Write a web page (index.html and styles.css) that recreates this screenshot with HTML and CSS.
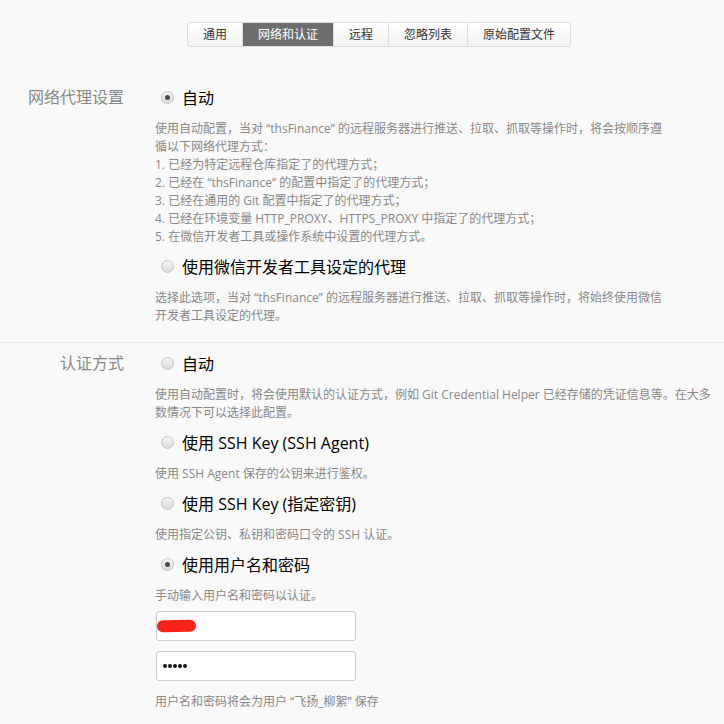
FILE: index.html
```html
<!DOCTYPE html>
<html lang="zh-CN">
<head>
<meta charset="utf-8">
<title>网络和认证</title>
<link rel="stylesheet" href="styles.css">
</head>
<body>
<div class="page">
  <nav class="tabs">
    <span class="tab">通用</span><span class="tab active">网络和认证</span><span class="tab">远程</span><span class="tab">忽略列表</span><span class="tab">原始配置文件</span>
  </nav>

  <section class="group first">
    <div class="glabel">网络代理设置</div>
    <div class="gbody">
      <div class="opt"><span class="radio checked"></span><span>自动</span></div>
      <p class="desc">使用自动配置，当对 “thsFinance” 的远程服务器进行推送、拉取、抓取等操作时，将会按顺序遵<br>循以下网络代理方式：<br>1. 已经为特定远程仓库指定了的代理方式；<br>2. 已经在 “thsFinance” 的配置中指定了的代理方式；<br>3. 已经在通用的 Git 配置中指定了的代理方式；<br>4. 已经在环境变量 HTTP_PROXY、HTTPS_PROXY 中指定了的代理方式；<br>5. 在微信开发者工具或操作系统中设置的代理方式。</p>
      <div class="opt"><span class="radio"></span><span>使用微信开发者工具设定的代理</span></div>
      <p class="desc">选择此选项，当对 “thsFinance” 的远程服务器进行推送、拉取、抓取等操作时，将始终使用微信<br>开发者工具设定的代理。</p>
    </div>
  </section>

  <section class="group second">
    <div class="glabel">认证方式</div>
    <div class="gbody">
      <div class="opt"><span class="radio"></span><span>自动</span></div>
      <p class="desc">使用自动配置时，将会使用默认的认证方式，例如 Git Credential Helper 已经存储的凭证信息等。在大多<br>数情况下可以选择此配置。</p>
      <div class="opt"><span class="radio"></span><span>使用 SSH Key (SSH Agent)</span></div>
      <p class="desc">使用 SSH Agent 保存的公钥来进行鉴权。</p>
      <div class="opt"><span class="radio"></span><span>使用 SSH Key (指定密钥)</span></div>
      <p class="desc">使用指定公钥、私钥和密码口令的 SSH 认证。</p>
      <div class="opt"><span class="radio checked"></span><span>使用用户名和密码</span></div>
      <p class="desc tight">手动输入用户名和密码以认证。</p>
      <div class="field user"><span class="scribble"></span></div>
      <div class="field pass"><span class="dot"></span><span class="dot"></span><span class="dot"></span><span class="dot"></span><span class="dot"></span></div>
      <p class="desc note">用户名和密码将会为用户 “飞扬_柳絮” 保存</p>
    </div>
  </section>
</div>
</body>
</html>
```

FILE: styles.css
```css
html, body {
  margin: 0;
  background: #f9f9f9;
  font-family: "Open Sans", "Noto Sans CJK SC", sans-serif;
}

.page {
  padding-top: 22px;
}

.tabs {
  display: flex;
  width: max-content;
  margin: 0 0 29px 187px;
  border: 1px solid #dcdcdc;
  border-radius: 3px;
  background: linear-gradient(#ffffff, #f2f2f2);
  overflow: hidden;
}

.tab {
  height: 23px;
  line-height: 23px;
  padding: 0 15px;
  font-size: 12px;
  color: #333;
  border-left: 1px solid #dedede;
}

.tab:first-child {
  border-left: 0;
}

.tab.active {
  background: #6e6e6e;
  color: #fff;
}

.group {
  display: grid;
  grid-template-columns: 124px 1fr;
  column-gap: 31px;
}

.group.first {
  padding: 9px 0 9px;
  border-bottom: 1px solid #e6e6e6;
}

.group.second {
  padding: 8px 0 0;
}

.glabel {
  text-align: right;
  font-size: 16px;
  line-height: 24px;
  color: #888;
}

.opt {
  display: flex;
  align-items: center;
  gap: 8px;
  height: 24px;
  padding-left: 6px;
  font-size: 16px;
  color: #000;
}

.radio {
  position: relative;
  flex: none;
  width: 13px;
  height: 13px;
  box-sizing: border-box;
  border-radius: 50%;
  border: 1px solid #c4c4c4;
  background: linear-gradient(#f6f6f6, #d9d9d9);
}

.radio.checked::after {
  content: "";
  position: absolute;
  left: 3px;
  top: 3px;
  width: 5px;
  height: 5px;
  border-radius: 50%;
  background: #4a4a4a;
}

.desc {
  margin: 10.5px 0 8.5px;
  font-size: 12px;
  line-height: 18px;
  color: #888;
  white-space: nowrap;
}

.desc.tight {
  margin-bottom: 6.5px;
}

.desc.note {
  margin-top: 12px;
}

.field {
  display: flex;
  align-items: center;
  width: 200px;
  height: 30px;
  box-sizing: border-box;
  margin-left: 1px;
  border: 1px solid #cccccc;
  border-radius: 3px;
  background: #fff;
}

.field.pass {
  margin-top: 10px;
  padding-left: 6px;
  gap: 1.2px;
}

.scribble {
  display: block;
  width: 39px;
  height: 12px;
  border-radius: 6px;
  background: #f5231a;
  transform: rotate(-1deg);
}

.dot {
  width: 3.8px;
  height: 3.8px;
  border-radius: 50%;
  background: #111;
}
```
